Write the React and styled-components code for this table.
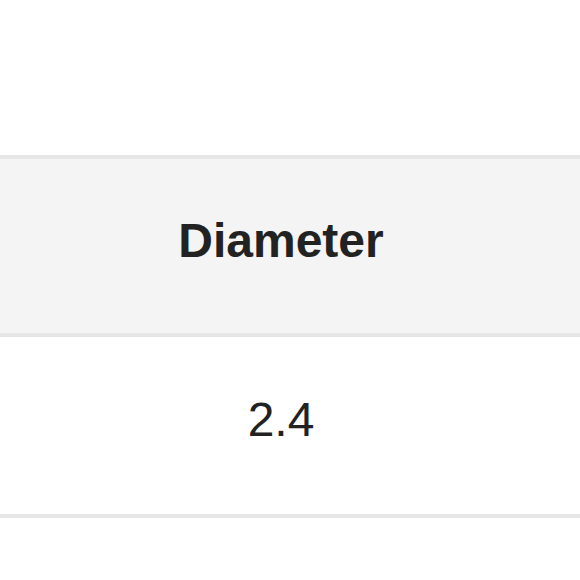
import React from 'react';
import styled, { createGlobalStyle } from 'styled-components';

const GlobalStyle = createGlobalStyle`
  html, body {
    margin: 0;
    padding: 0;
    background: #ffffff;
    overflow: hidden;
  }
  body {
    font-family: "Liberation Sans", Arial, sans-serif;
    color: #222222;
  }
`;

const Page = styled.div`
  width: 580px;
  height: 580px;
  padding-top: 155px;
  box-sizing: border-box;
  overflow: hidden;
`;

const Table = styled.table`
  width: 602px;
  margin-left: -20px;
  border-collapse: collapse;
`;

const HeadCell = styled.th`
  background: #f4f4f4;
  border-top: 4px solid #e6e6e6;
  border-bottom: 4px solid #e6e6e6;
  padding: 54px 0 64px;
  font-size: 48px;
  line-height: 56px;
  font-weight: 700;
  text-align: center;
  color: #222222;
`;

const Cell = styled.td`
  background: #ffffff;
  border-bottom: 4px solid #e6e6e6;
  padding: 55px 0 66px;
  font-size: 48px;
  line-height: 56px;
  font-weight: 400;
  text-align: center;
  color: #222222;
`;

export default function App() {
  return (
    <>
      <GlobalStyle />
      <Page>
        <Table>
          <thead>
            <tr>
              <HeadCell>Diameter</HeadCell>
            </tr>
          </thead>
          <tbody>
            <tr>
              <Cell>2.4</Cell>
            </tr>
          </tbody>
        </Table>
      </Page>
    </>
  );
}
